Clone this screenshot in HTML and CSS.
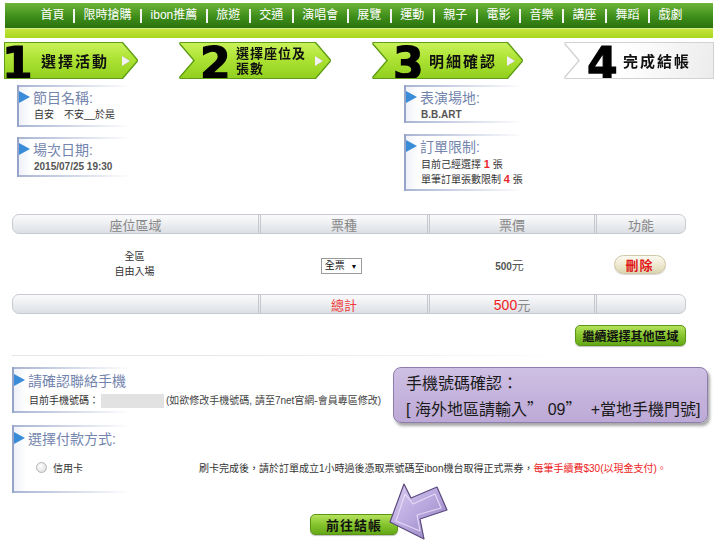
FILE: index.html
```html
<!DOCTYPE html>
<html lang="zh-Hant">
<head>
<meta charset="utf-8">
<title>明細確認</title>
<link rel="stylesheet" href="styles.css">
</head>
<body>
<div class="nav">
  <span class="nav-item">首頁</span><span class="sep"></span>
  <span class="nav-item">限時搶購</span><span class="sep"></span>
  <span class="nav-item">ibon推薦</span><span class="sep"></span>
  <span class="nav-item">旅遊</span><span class="sep"></span>
  <span class="nav-item">交通</span><span class="sep"></span>
  <span class="nav-item">演唱會</span><span class="sep"></span>
  <span class="nav-item">展覽</span><span class="sep"></span>
  <span class="nav-item">運動</span><span class="sep"></span>
  <span class="nav-item">親子</span><span class="sep"></span>
  <span class="nav-item">電影</span><span class="sep"></span>
  <span class="nav-item">音樂</span><span class="sep"></span>
  <span class="nav-item">講座</span><span class="sep"></span>
  <span class="nav-item">舞蹈</span><span class="sep"></span>
  <span class="nav-item">戲劇</span>
</div>
<div class="lime"></div>

<div class="steps">
  <div class="step green s1">
    <div class="shape first"><span class="num">1</span><span class="label">選擇活動</span><span class="tri"></span></div>
  </div>
  <div class="step green s2">
    <div class="shape mid"><span class="num">2</span><span class="label two">選擇座位及<br>張數</span><span class="tri"></span></div>
  </div>
  <div class="step green s3">
    <div class="shape mid"><span class="num">3</span><span class="label">明細確認</span><span class="tri"></span></div>
  </div>
  <div class="step grey s4">
    <div class="shape last"><span class="num">4</span><span class="label">完成結帳</span></div>
  </div>
</div>

<div class="info">
  <div class="col">
    <div class="box b1">
      <div class="box-title">節目名稱:</div>
      <div class="box-body">自安　不安__於是</div>
    </div>
    <div class="box b2">
      <div class="box-title">場次日期:</div>
      <div class="box-body strong">2015/07/25 19:30</div>
    </div>
  </div>
  <div class="col">
    <div class="box b3">
      <div class="box-title">表演場地:</div>
      <div class="box-body strong">B.B.ART</div>
    </div>
    <div class="box b4">
      <div class="box-title">訂單限制:</div>
      <div class="box-body">目前己經選擇 <b class="red">1</b> 張<br>單筆訂單張數限制 <b class="red">4</b> 張</div>
    </div>
  </div>
</div>

<div class="grid">
  <div class="thead">
    <div>座位區域</div><div>票種</div><div>票價</div><div>功能</div>
  </div>
  <div class="trow">
    <div class="area">全區<br>自由入場</div>
    <div><span class="select">全票 <i>▼</i></span></div>
    <div class="price"><span class="num-s">500</span>元</div>
    <div><span class="del">刪除</span></div>
  </div>
  <div class="thead total">
    <div></div><div class="red-t">總計</div><div><span class="big-red">500</span>元</div><div></div>
  </div>
</div>

<div class="actions">
  <span class="btn continue">繼續選擇其他區域</span>
</div>
<div class="divider"></div>

<div class="contact-row">
  <div class="box b5">
    <div class="box-title">請確認聯絡手機</div>
    <div class="box-body phone"><span class="ph-label">目前手機號碼：</span><span class="mask"></span><span class="hint">(如欲修改手機號碼, 請至7net官網-會員專區修改)</span></div>
  </div>
  <div class="callout">手機號碼確認：<br>[ 海外地區請輸入<span class="fw">”</span>09<span class="fw">”</span>&nbsp;+當地手機門號]</div>
</div>

<div class="box b6">
  <div class="box-title">選擇付款方式:</div>
  <div class="pay-row">
    <span class="radio"></span><span class="pay-label">信用卡</span>
    <span class="pay-note">刷卡完成後，請於訂單成立1小時過後憑取票號碼至ibon機台取得正式票券，<span class="red-n">每筆手續費$30(以現金支付)。</span></span>
  </div>
</div>

<div class="checkout-wrap">
  <span class="btn checkout">前往結帳</span>
</div>

<svg class="arrow" width="66" height="60" viewBox="0 0 66 60" xmlns="http://www.w3.org/2000/svg">
  <defs>
    <linearGradient id="ag" x1="0" y1="0" x2="1" y2="1">
      <stop offset="0" stop-color="#d9cdf0"/>
      <stop offset="0.5" stop-color="#b9a7de"/>
      <stop offset="1" stop-color="#8f7cba"/>
    </linearGradient>
  </defs>
  <polygon points="4,40 18,2 25,16 51,5 61,28 34,37 38,57" fill="url(#ag)" stroke="#5a4a7e" stroke-width="1.2" stroke-linejoin="round"/>
  <polygon points="10,39 19,12 27,22 49,12 55,26 31,33 34,49" fill="none" stroke="#ece4fb" stroke-width="1.2" stroke-linejoin="round" opacity="0.8"/>
</svg>
</body>
</html>
```

FILE: styles.css
```css
html, body {
  margin: 0;
  padding: 0;
  background: #fff;
}
body {
  width: 720px;
  height: 540px;
  overflow: hidden;
  position: relative;
  font-family: "Liberation Sans", "Noto Sans CJK TC", sans-serif;
  color: #333;
}

/* top nav */
.nav {
  margin: 3px 7px 0 5px;
  height: 25px;
  padding-left: 5px;
  box-sizing: border-box;
  display: flex;
  align-items: center;
  justify-content: center;
  background: linear-gradient(#6fb53a, #3e8e1a 55%, #2b720f);
  color: #fff;
  font-size: 12px;
}
.nav-item {
  padding: 0 8.5px;
  line-height: 25px;
}
.nav .sep {
  width: 2px;
  height: 14px;
  background: #f4f4f4;
}
.lime {
  margin: 0 7px 0 5px;
  height: 10px;
  border-top: 1px solid #d6ee86;
  box-sizing: border-box;
  background: linear-gradient(#c3e43c, #a8d61e);
}

/* steps */
.steps {
  display: flex;
  gap: 43px;
  margin: 5px 0 0 5px;
}
.step {
  height: 35px;
}
.step.green {
  filter: drop-shadow(1px 0 0 #5f9e16) drop-shadow(-1px 0 0 #5f9e16) drop-shadow(0 1px 0 #5f9e16) drop-shadow(0 -1px 0 #5f9e16);
}
.step.grey {
  filter: drop-shadow(1px 0 0 #d2d2d2) drop-shadow(-1px 0 0 #d2d2d2) drop-shadow(0 1px 0 #d2d2d2) drop-shadow(0 -1px 0 #d2d2d2);
}
.s1 { width: 132px; }
.s2 { width: 150px; }
.s3 { width: 149px; }
.s4 { width: 148px; }
.shape {
  height: 100%;
  display: flex;
  align-items: center;
  box-sizing: border-box;
}
.green .shape {
  background: linear-gradient(#c9f25a, #ade334 45%, #92cf1e);
}
.grey .shape {
  background: linear-gradient(100deg, #ffffff 40%, #ececec);
}
.shape.first {
  clip-path: polygon(0 0, calc(100% - 15px) 0, 100% 50%, calc(100% - 15px) 100%, 0 100%);
}
.shape.mid {
  padding-left: 20px;
  clip-path: polygon(0 0, calc(100% - 15px) 0, 100% 50%, calc(100% - 15px) 100%, 0 100%, 15px 50%);
}
.shape.last {
  padding-left: 22px;
  clip-path: polygon(0 0, 100% 0, 100% 100%, 0 100%, 15px 50%);
}
.num {
  flex-shrink: 0;
  font-family: "DejaVu Sans", sans-serif;
  font-weight: bold;
  font-size: 44px;
  line-height: 35px;
  height: 35px;
  width: 29px;
  color: #000;
  -webkit-text-stroke: 1.2px #000;
  margin-top: 6px;
  letter-spacing: -1px;
}
.first .num {
  margin-left: -3px;
  width: 32px;
}
.label {
  margin-left: 7px;
  font-weight: bold;
  font-size: 15px;
  letter-spacing: 2px;
  color: #111;
  white-space: nowrap;
}
.label.two {
  font-size: 13px;
  line-height: 15px;
  letter-spacing: 1px;
}
.tri {
  flex-shrink: 0;
  margin-left: auto;
  margin-right: 7px;
  width: 0;
  height: 0;
  border-left: 8px solid #f2f2f2;
  border-top: 5px solid transparent;
  border-bottom: 5px solid transparent;
  filter: drop-shadow(0 0 0.6px #8a8a8a);
}

/* info boxes */
.info {
  display: grid;
  grid-template-columns: 387px 1fr;
  margin-top: 7px;
  padding-left: 17px;
  height: 106px;
}
.box {
  width: 115px;
  box-sizing: border-box;
  border-left: 2px solid #95a4c8;
  background:
    linear-gradient(to right, #a9b5d3, rgba(169, 181, 211, 0)) top left / 100% 2px no-repeat,
    linear-gradient(to right, #a9b5d3, rgba(169, 181, 211, 0)) bottom left / 100% 2px no-repeat,
    linear-gradient(to right, #eef1f8, rgba(255, 255, 255, 0) 12px);
  padding-top: 3px;
  white-space: nowrap;
}
.b1 { height: 42px; margin-bottom: 10px; }
.b2 { height: 40px; }
.b3 { height: 38px; margin-bottom: 11px; width: 120px; }
.b4 { height: 57px; width: 120px; }
.box-title {
  display: flex;
  align-items: center;
  height: 18px;
  font-size: 14px;
  color: #7385ad;
}
.box-title::before {
  content: "";
  flex-shrink: 0;
  width: 0;
  height: 0;
  border-left: 11px solid #3a8bd8;
  border-top: 6px solid transparent;
  border-bottom: 6px solid transparent;
  margin-right: 3px;
}
.box-body {
  padding-left: 15px;
  margin-top: 2px;
  font-size: 10px;
  line-height: 14px;
  color: #333;
}
.box-body.strong {
  font-weight: bold;
  color: #555;
}
.red {
  color: #e8262b;
  font-size: 11px;
}

/* table */
.grid {
  margin: 23px 0 0 12px;
  width: 674px;
}
.thead, .trow {
  display: grid;
  grid-template-columns: 245px 169px 167px 1fr;
}
.thead {
  height: 20px;
  box-sizing: border-box;
  border: 1px solid #c7cbd1;
  border-radius: 7px;
  background: linear-gradient(#fbfbfc, #eceef1 50%, #dcdfe4);
}
.thead > div {
  display: flex;
  align-items: center;
  justify-content: center;
  font-size: 13px;
  color: #888;
}
.thead > div + div {
  border-left: 3px double #c4c8ce;
}
.trow {
  height: 60px;
  align-items: center;
  justify-items: center;
}
.area {
  text-align: center;
  font-size: 10px;
  line-height: 15px;
  color: #333;
}
.select {
  display: inline-block;
  border: 1px solid #9a9a9a;
  background: #fff;
  font-size: 10px;
  line-height: 13px;
  padding: 0 4px 0 3px;
  color: #111;
}
.select i {
  font-style: normal;
  font-size: 7px;
  margin-left: 3px;
}
.price {
  font-size: 12px;
  color: #555;
}
.num-s {
  font-size: 10px;
  font-weight: bold;
  color: #555;
}
.del {
  display: inline-flex;
  align-items: center;
  justify-content: center;
  width: 52px;
  height: 19px;
  box-sizing: border-box;
  border: 1px solid #cfc7a6;
  border-radius: 10px;
  background: linear-gradient(#fbfaf0, #ece6cc 60%, #dcd4b2);
  color: #e01818;
  font-weight: bold;
  font-size: 13px;
  letter-spacing: 1px;
  box-shadow: 0 1px 1px rgba(0, 0, 0, 0.15);
}
.total > .red-t {
  color: #f03a3a;
}
.big-red {
  color: #f01c1c;
  font-size: 14px;
}

/* buttons */
.actions {
  margin: 11px 0 0 12px;
  width: 674px;
  display: flex;
  justify-content: flex-end;
}
.btn {
  display: inline-flex;
  align-items: center;
  justify-content: center;
  height: 21px;
  box-sizing: border-box;
  border: 1px solid #5b9617;
  border-radius: 5px;
  background: linear-gradient(#b5e25c, #86c52e 50%, #64a817);
  font-weight: bold;
  color: #111;
  box-shadow: 0 1px 1px rgba(0, 0, 0, 0.25);
}
.continue {
  width: 111px;
  font-size: 12px;
}
.divider {
  margin: 9px 0 0 12px;
  width: 560px;
  height: 1px;
  background: linear-gradient(to right, #e6e6e6, #ececec 60%, rgba(255, 255, 255, 0));
}

/* contact */
.contact-row {
  margin: 11px 0 0 12px;
  width: 696px;
  display: flex;
  justify-content: space-between;
  height: 56px;
}
.b5 {
  height: 46px;
  width: 118px;
  padding-top: 4px;
  flex-shrink: 0;
}
.phone {
  display: flex;
  align-items: center;
  margin-top: 5px;
}
.phone > span {
  flex-shrink: 0;
}
.mask {
  display: inline-block;
  width: 63px;
  height: 14px;
  background: #e2e2e2;
  margin: 0 2px;
}
.hint {
  color: #444;
}
.callout {
  flex-shrink: 0;
  width: 315px;
  height: 56px;
  box-sizing: border-box;
  border: 1px solid #8d7dad;
  border-radius: 8px;
  background: linear-gradient(#cebfe3, #bda9d6);
  box-shadow: 2px 3px 3px rgba(0, 0, 0, 0.35);
  padding: 4px 0 0 12px;
  font-size: 16px;
  line-height: 24px;
  color: #1a1a1a;
  white-space: nowrap;
}
.callout .fw {
  font-family: "Noto Sans CJK TC", sans-serif;
  display: inline-block;
  width: 1.3em;
  text-align: left;
}

/* payment */
.b6 {
  margin: 2px 0 0 12px;
  height: 68px;
  width: 118px;
  padding-top: 4px;
}
.pay-row {
  display: flex;
  align-items: center;
  height: 14px;
  margin-top: 13px;
  font-size: 10px;
  color: #333;
}
.pay-row > span {
  flex-shrink: 0;
}
.radio {
  width: 9px;
  height: 9px;
  border-radius: 50%;
  border: 1px solid #b4b4b4;
  background: radial-gradient(circle at 40% 35%, #ffffff, #d8d8d8);
  margin-left: 22px;
}
.pay-label {
  margin-left: 6px;
}
.pay-note {
  margin-left: 116px;
}
.red-n {
  color: #ee2222;
}

.checkout-wrap {
  margin: 21px 0 0 310px;
}
.checkout {
  width: 88px;
  font-size: 13px;
  letter-spacing: 1px;
}

.arrow {
  position: absolute;
  left: 386px;
  top: 482px;
}
```
